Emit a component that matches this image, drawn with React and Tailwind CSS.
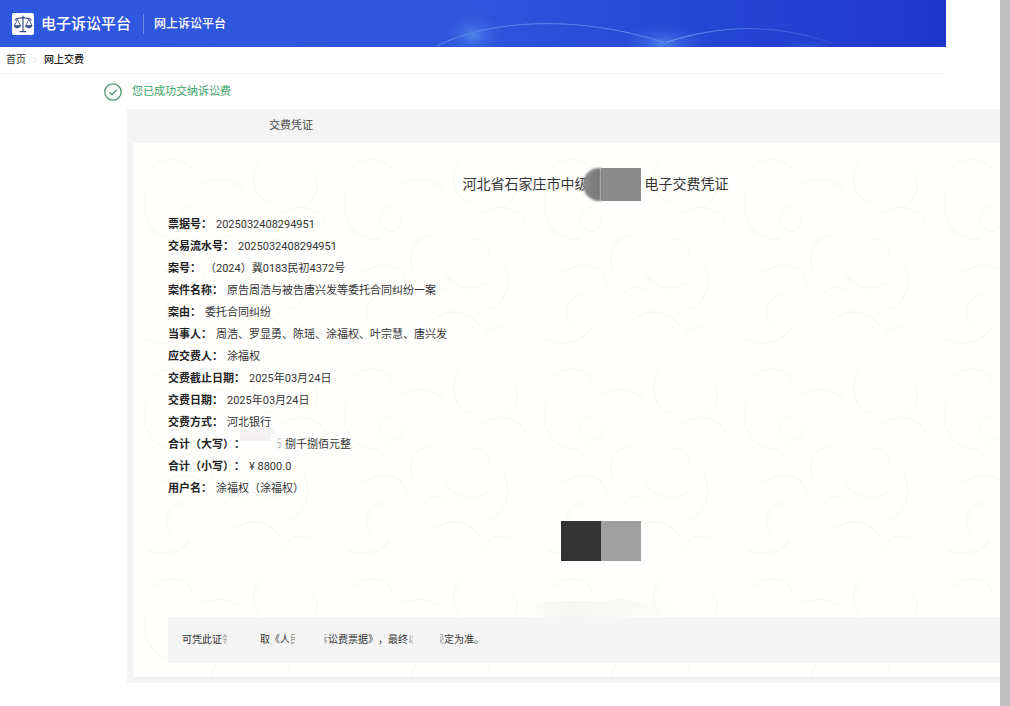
const ROWS = [
  ['票据号：', '2025032408294951'],
  ['交易流水号：', '2025032408294951'],
  ['案号：', '（2024）冀0183民初4372号'],
  ['案件名称：', '原告周浩与被告唐兴发等委托合同纠纷一案'],
  ['案由：', '委托合同纠纷'],
  ['当事人：', '周浩、罗显勇、陈瑶、涂福权、叶宗慧、唐兴发'],
  ['应交费人：', '涂福权'],
  ['交费截止日期：', '2025年03月24日'],
  ['交费日期：', '2025年03月24日'],
  ['交费方式：', '河北银行'],
  ['合计（大写）：', <MaskedAmount key="amount" />],
  ['合计（小写）：', '¥ 8800.0'],
  ['用户名：', '涂福权（涂福权）'],
];

function MaskedAmount() {
  return (
    <span className="relative flex">
      <span className="absolute -top-[7px] -left-[9px] h-[14px] w-[36px] rounded-t-lg bg-linear-to-b from-[#f9f8f7] to-[#f1efef]" />
      <span className="w-[22px]" />
      <span className="relative mr-[3px] text-[#aaa]">
        币
        <span className="absolute inset-y-0 left-0 w-[6px] bg-[#fffffd]" />
      </span>
      捌千捌佰元整
    </span>
  );
}

function Scales() {
  return (
    <svg viewBox="0 0 22 22" className="size-[22px] shrink-0" aria-hidden="true">
      <rect width="22" height="22" rx="2" fill="#fff" />
      <g fill="none" stroke="#3c4f8f" strokeWidth="1.2" strokeLinecap="round" strokeLinejoin="round">
        <path d="M11 3.2v15M8 18.6h6M3 7c2-2.600 5-1 8-2.600 3 1.600 6 0 8 2.600" />
        <path d="M5.300 6.500L2.300 13h6zM16.700 6.500l-3 6.500h6z" strokeWidth=".9" />
        <path d="M2.300 13c.4 2.600 5.600 2.600 6 0zM13.700 13c.4 2.600 5.600 2.600 6 0z" fill="#3c4f8f" strokeWidth=".8" />
      </g>
    </svg>
  );
}

function HeaderArcs() {
  return (
    <svg
      viewBox="0 0 946 47"
      preserveAspectRatio="none"
      className="absolute inset-0 size-full"
      aria-hidden="true"
    >
      <defs>
        <radialGradient id="glow">
          <stop offset="0" stopColor="#5792ee" stopOpacity=".8" />
          <stop offset=".4" stopColor="#4a7fea" stopOpacity=".4" />
          <stop offset="1" stopColor="#3f6ae6" stopOpacity="0" />
        </radialGradient>
        <linearGradient id="fade" x1="0" x2="1">
          <stop offset="0" stopColor="#6f9cf5" />
          <stop offset="1" stopColor="#5578ea" stopOpacity=".3" />
        </linearGradient>
      </defs>
      <ellipse cx="473" cy="35" rx="30" ry="22" fill="url(#glow)" />
      <ellipse cx="663" cy="44" rx="42" ry="20" fill="url(#glow)" />
      <ellipse cx="806" cy="48" rx="34" ry="8" fill="url(#glow)" opacity=".4" />
      <path d="M437 46C488 20 574 14 663 42" fill="none" stroke="#5b86ef" strokeWidth="1" />
      <path d="M667 42C720 25 774 23 832 43" fill="none" stroke="url(#fade)" strokeWidth="1" />
    </svg>
  );
}

function Watermark() {
  return (
    <svg className="absolute inset-0 size-full" aria-hidden="true">
      <defs>
        <pattern id="swirl" width="200" height="210" patternUnits="userSpaceOnUse">
          <g fill="none" strokeWidth="1.500" strokeLinecap="round">
            <path stroke="#fbf9f3" d="M12 52c-4 26 10 46 34 44M20 24c14-12 32-10 40 4M70 40c16-6 30-4 40 6M126 18c-10 16-6 34 10 42M150 70c16-10 34-6 42 8M96 92c-14 4-22 18-16 32" />
            <path stroke="#fcf8f5" d="M30 130c18-14 40-8 44 10M52 150c-16 2-24 18-14 30M112 130c10 16 30 20 44 8M170 120c10 18 4 38-12 46M100 176c18-12 36-8 46 6M14 196c14 8 34 4 42-8" />
            <path stroke="#fafaf7" d="M60 64c-12 0-18 12-10 20s20 2 18-8M140 96c12-2 20 8 14 18M180 30c8 12 4 24-6 30M92 150c6-8 16-8 22-2M176 186c-10-6-20-2-24 8" />
          </g>
        </pattern>
      </defs>
      <rect width="100%" height="100%" fill="url(#swirl)" />
    </svg>
  );
}

function Faded({ children, side = 'right' }) {
  return (
    <span className="relative text-[#999]">
      {children}
      <span
        className={
          side === 'right'
            ? 'absolute inset-y-0 right-0 w-[5px] bg-[#f5f5f5]'
            : 'absolute inset-y-0 left-0 w-[6px] bg-[#f5f5f5]'
        }
      />
    </span>
  );
}

export default function App() {
  return (
    <div className="flex min-h-screen bg-white font-[Roboto,'Noto_Sans_CJK_SC',sans-serif] text-[#333] [text-spacing-trim:space-all]">
      <div className="min-w-0 flex-1">
        <div className="mr-[54px]">
          <header className="relative flex h-[47px] items-center bg-linear-to-r from-[#3058df] via-[#2f54dd] to-[#2036cb] pl-3 text-white">
            <HeaderArcs />
            <div className="relative flex items-center">
              <Scales />
              <h1 className="ml-[7px] text-[15px] leading-5 font-medium">电子诉讼平台</h1>
              <span className="mr-[10px] ml-3 h-5 w-px bg-[#6f8cec]" />
              <span className="text-[12px] leading-5 font-medium">网上诉讼平台</span>
            </div>
          </header>
          <nav className="flex h-[27px] items-center border-b border-[#f6f6f6] pl-[6px] text-[10px] leading-6">
            <a href="#home">首页</a>
            <svg viewBox="0 0 6 8" className="mx-[6px] h-2 w-[6px]" aria-hidden="true">
              <path d="M1.500 1l3 3-3 3" fill="none" stroke="#ccc" strokeWidth=".8" />
            </svg>
            <span className="font-medium text-[#222]">网上交费</span>
          </nav>
        </div>

        <div className="flex h-[35px] items-center pl-[104px] text-[11px] leading-[22px] text-[#35a169]">
          <svg viewBox="0 0 18 18" className="mr-[10px] size-[18px]" aria-hidden="true">
            <g fill="none" stroke="#3d9469" strokeWidth="1.200">
              <circle cx="9" cy="9" r="8.200" />
              <path d="M5.500 9.200l2.500 2.400 4.600-4.600" />
            </g>
          </svg>
          您已成功交纳诉讼费
        </div>

        <main className="ml-[127px] bg-[#f4f4f4] pb-1 pl-[6px]">
          <h2 className="flex h-[34px] items-center pl-[136px] text-[11px] leading-[22px] text-[#444]">交费凭证</h2>
          <section className="relative border-b-2 border-[#f0f0f0] bg-[#fffffd] pb-[14px] pl-[35px]">
            <Watermark />
            <div className="relative">
              <h3 className="flex h-[71px] items-center justify-center pt-[11px] pl-[23px] text-[14px] text-[#333]">
                <span>河北省石家庄市中级</span>
                <span className="-ml-[6px] mr-1 flex h-[33px] w-[58px]">
                  <span className="w-[18px] rounded-l-2xl bg-linear-to-r from-[#8c8a8a] to-[#777] blur-[1px]" />
                  <span className="flex-1 bg-[#8b8a8b]" />
                </span>
                <span>电子交费凭证</span>
              </h3>
              <dl className="text-[11px] leading-[22px]">
                {ROWS.map(([label, value]) => (
                  <div key={label} className="flex gap-1">
                    <dt className="font-bold text-[#222]">{label}</dt>
                    <dd>{value}</dd>
                  </div>
                ))}
              </dl>
              <div className="mt-[21px] flex justify-center pl-[34px]">
                <div className="size-[40px] bg-[#333]" />
                <div className="size-[40px] bg-[#a0a0a0]" />
              </div>
              <div className="mt-10 flex justify-center pl-[34px]">
                <div className="h-4 w-[160px] bg-linear-to-r from-transparent via-[#f5f5f4] via-30% to-transparent" />
              </div>
              <p className="flex h-[46px] items-center bg-[#f5f5f5] pl-[14px] text-[10px] leading-5">
                可凭此证
                <Faded>领</Faded>
                <span className="w-[28px]" />
                取《人
                <Faded>民</Faded>
                <span className="w-[18px]" />
                <Faded side="left">诉</Faded>
                讼费票据》，最终
                <Faded>以</Faded>
                <span className="w-[16px]" />
                <Faded side="left">规</Faded>
                定为准。
              </p>
            </div>
          </section>
        </main>
      </div>
      <div className="w-[10px] shrink-0 bg-[#c0c0c0]" />
    </div>
  );
}
